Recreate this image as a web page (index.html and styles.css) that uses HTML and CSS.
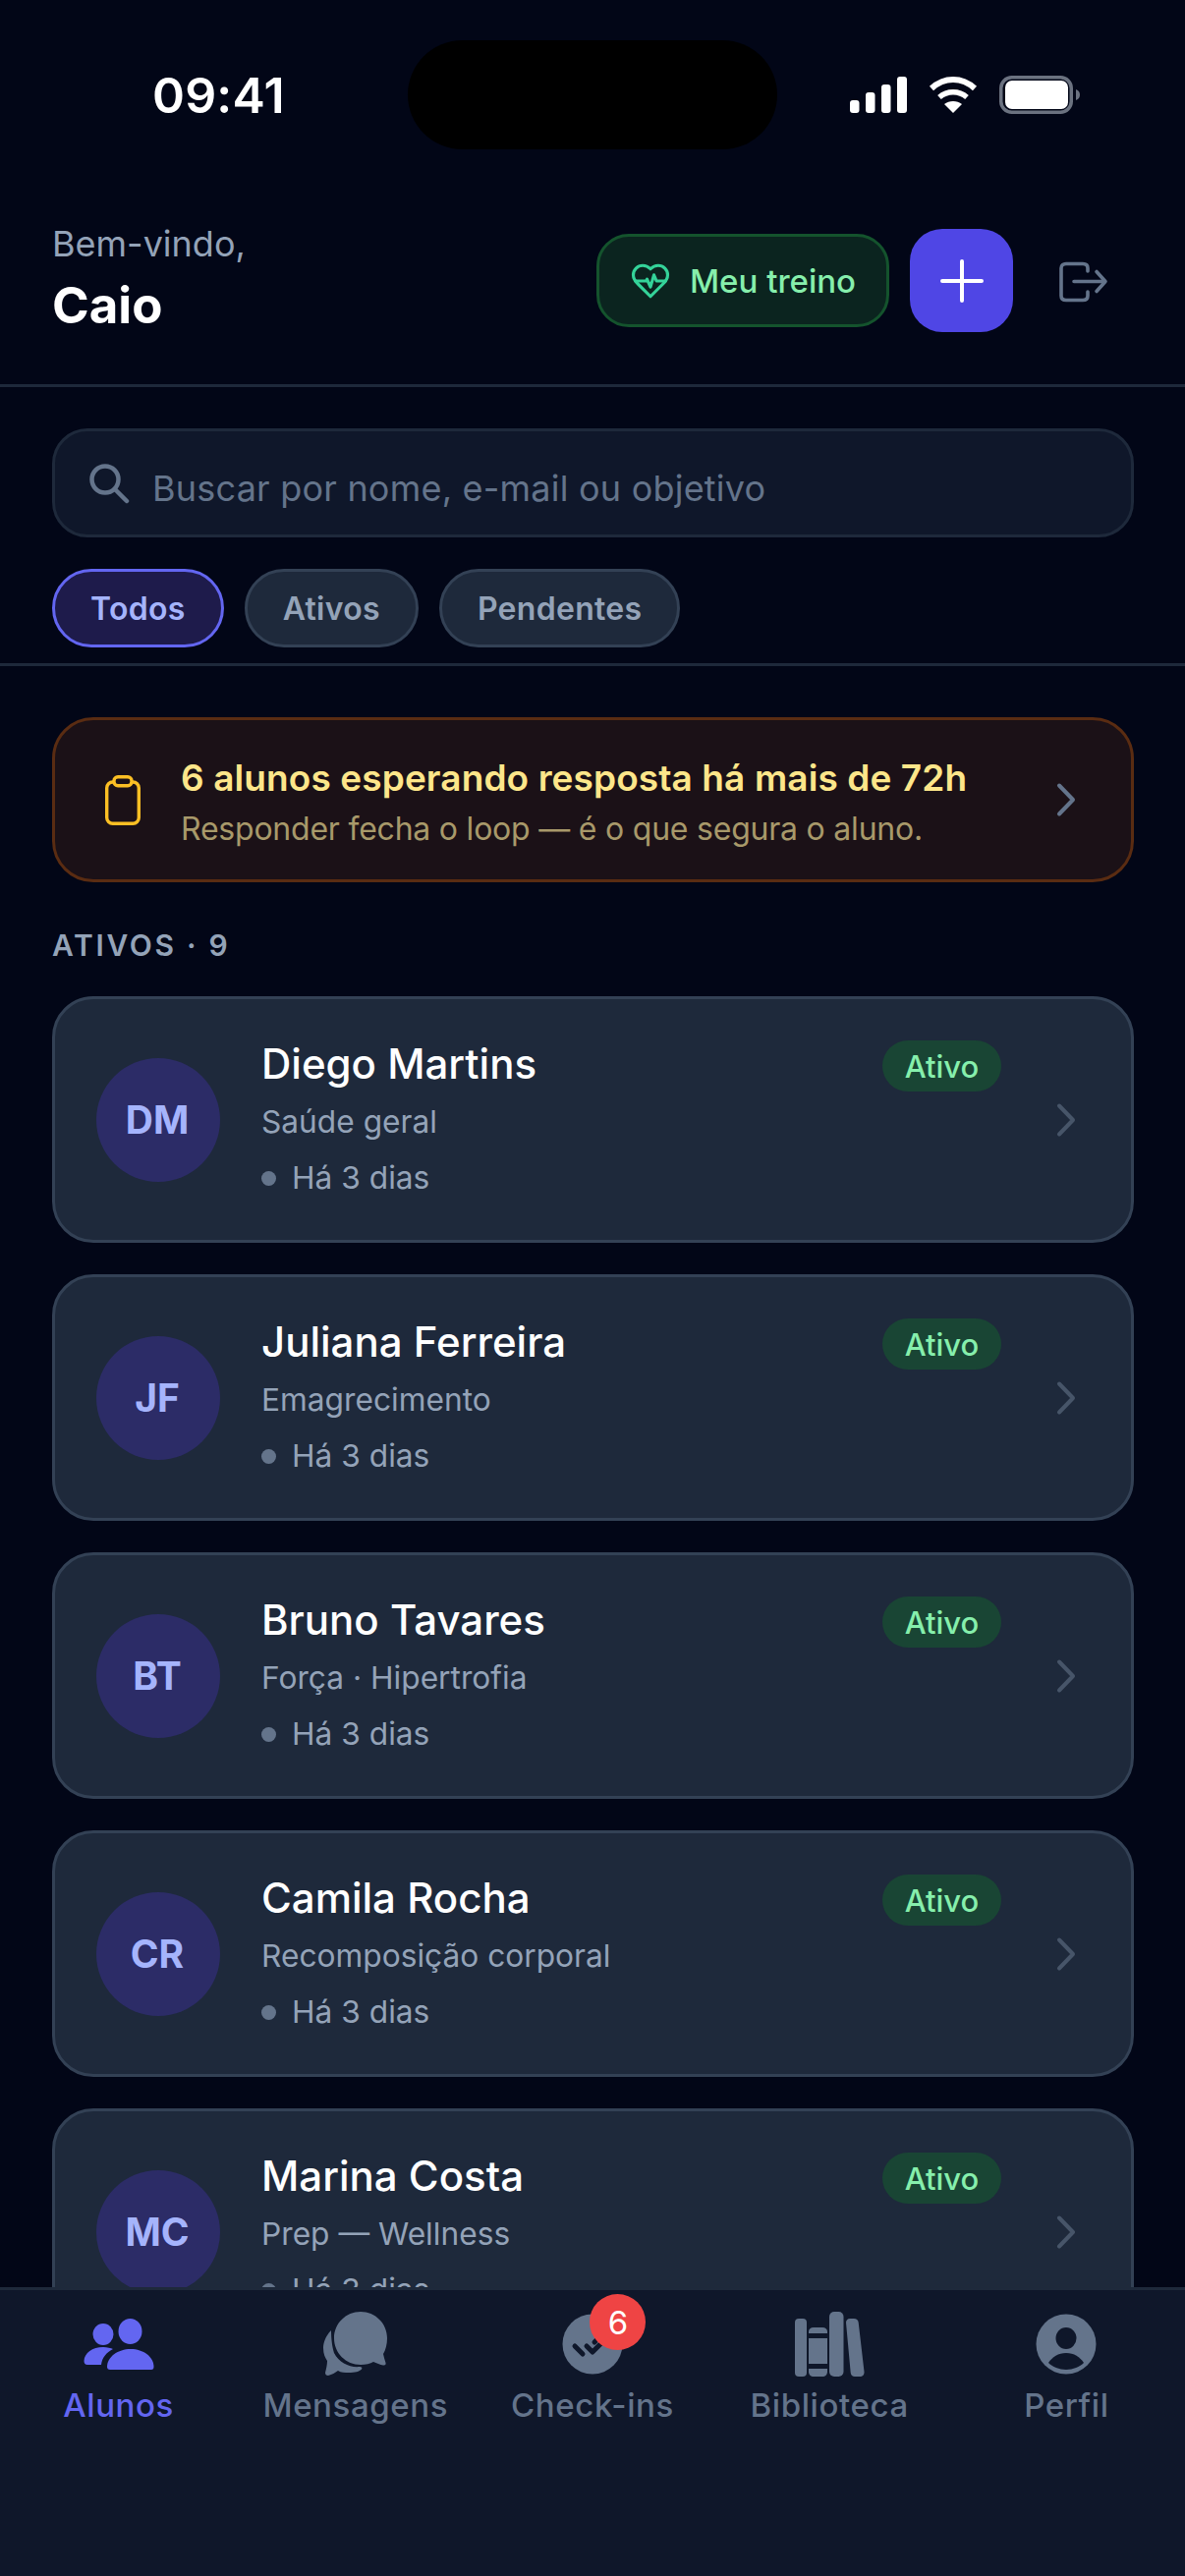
FILE: index.html
```html
<!DOCTYPE html>
<html lang="pt-BR">
<head>
	<meta charset="UTF-8">
	<title>Alunos</title>
	<link rel="stylesheet" href="styles.css">
</head>
<body>
	<div class="app">
		<div class="status-bar">
			<span class="status-time">09:41</span>
			<div class="island"></div>
			<div class="status-icons">
				<svg width="58" height="37" viewBox="0 0 58 37" fill="#fff">
					<rect x="0" y="24" width="9.5" height="13" rx="3"/>
					<rect x="16" y="16" width="9.5" height="21" rx="3"/>
					<rect x="32" y="8" width="9.5" height="29" rx="3"/>
					<rect x="48" y="0" width="10" height="37" rx="3"/>
				</svg>
				<svg width="50" height="37" viewBox="0 0 50 37" fill="none" stroke="#fff">
					<path d="M3 12C16 0 34 0 47 12" stroke-width="6"/>
					<path d="M11 21C19 14 31 14 39 21" stroke-width="5.5"/>
					<path d="M25 37L16 28C21 24 29 24 34 28Z" fill="#fff" stroke="none"/>
				</svg>
				<svg width="82" height="39" viewBox="0 0 82 39">
					<rect x="1.75" y="1.75" width="71.5" height="35.5" rx="11" fill="none" stroke="#6b7280" stroke-width="3.5"/>
					<rect x="6" y="5" width="64" height="29" rx="7" fill="#fff"/>
					<path d="M78 14C81 15 82 17 82 19.5C82 22 81 24 78 25Z" fill="#6b7280"/>
				</svg>
			</div>
		</div>

		<header class="header">
			<div class="greeting">
				<span class="greeting-hello">Bem-vindo,</span>
				<span class="greeting-name">Caio</span>
			</div>
			<div class="header-actions">
				<div class="btn-workout">
					<svg width="42" height="42" viewBox="0 0 24 24" fill="none" stroke="#34d399" stroke-width="1.8" stroke-linecap="round" stroke-linejoin="round">
						<path d="M19 14c1.49-1.46 3-3.21 3-5.5A5.5 5.5 0 0 0 16.5 3c-1.76 0-3 .5-4.5 2-1.5-1.5-2.74-2-4.5-2A5.5 5.5 0 0 0 2 8.5c0 2.3 1.5 4.05 3 5.5l7 7Z"/>
						<path d="M3.22 12H9.5l.5-1 2 4.5 2-7 1.5 3.5h5.27"/>
					</svg>
					<span>Meu treino</span>
				</div>
				<div class="btn-add">
					<svg width="48" height="48" viewBox="0 0 48 48" stroke="#fff" stroke-width="4" stroke-linecap="round">
						<path d="M24 4V44M4 24H44"/>
					</svg>
				</div>
				<div class="btn-logout">
					<svg width="54" height="48" viewBox="0 0 54 48" fill="none" stroke="#64748b" stroke-width="3.6" stroke-linecap="round" stroke-linejoin="round">
						<path d="M32 14V11C32 8 30 6.5 27 6.5H10C7 6.5 5 8 5 11V39C5 42 7 43.5 10 43.5H27C30 43.5 32 42 32 39V35"/>
						<path d="M18 24.5H50M41 14.5L50 24.5L41 34.5"/>
					</svg>
				</div>
			</div>
		</header>

		<section class="filters">
			<div class="search">
				<svg width="42" height="42" viewBox="0 0 42 42" fill="none" stroke="#64748b" stroke-width="4.5" stroke-linecap="round">
					<circle cx="17" cy="17" r="13.5"/>
					<path d="M27 27L39 39"/>
				</svg>
				<span class="search-text">Buscar por nome, e-mail ou objetivo</span>
			</div>
			<div class="chips">
				<span class="chip chip-active">Todos</span>
				<span class="chip">Ativos</span>
				<span class="chip">Pendentes</span>
			</div>
		</section>

		<main class="list">
			<div class="alert">
				<svg class="alert-icon" width="36" height="51" viewBox="0 0 36 51" fill="none" stroke="#fbbf24" stroke-width="3.4" stroke-linejoin="round">
					<rect x="1.7" y="7" width="32.6" height="42.3" rx="6"/>
					<rect x="9" y="1.7" width="18" height="9" rx="4" fill="#1b1117"/>
				</svg>
				<div class="alert-text">
					<span class="alert-title">6 alunos esperando resposta há mais de 72h</span>
					<span class="alert-sub">Responder fecha o loop — é o que segura o aluno.</span>
				</div>
				<svg class="chevron" width="36" height="36" viewBox="0 0 36 36" fill="none" stroke="#64748b" stroke-width="4" stroke-linecap="round" stroke-linejoin="round">
					<path d="M11 3.5L25 18L11 32.5"/>
				</svg>
			</div>

			<div class="section-label">ATIVOS · 9</div>

			<div class="cards">
				<div class="card">
					<div class="avatar">DM</div>
					<div class="card-body">
						<div class="card-top">
							<span class="card-name">Diego Martins</span>
							<span class="badge">Ativo</span>
						</div>
						<div class="card-goal">Saúde geral</div>
						<div class="card-meta"><i class="dot"></i>Há 3 dias</div>
					</div>
					<svg class="chevron" width="36" height="36" viewBox="0 0 36 36" fill="none" stroke="#475569" stroke-width="4" stroke-linecap="round" stroke-linejoin="round"><path d="M11 3.5L25 18L11 32.5"/></svg>
				</div>
				<div class="card">
					<div class="avatar">JF</div>
					<div class="card-body">
						<div class="card-top">
							<span class="card-name">Juliana Ferreira</span>
							<span class="badge">Ativo</span>
						</div>
						<div class="card-goal">Emagrecimento</div>
						<div class="card-meta"><i class="dot"></i>Há 3 dias</div>
					</div>
					<svg class="chevron" width="36" height="36" viewBox="0 0 36 36" fill="none" stroke="#475569" stroke-width="4" stroke-linecap="round" stroke-linejoin="round"><path d="M11 3.5L25 18L11 32.5"/></svg>
				</div>
				<div class="card">
					<div class="avatar">BT</div>
					<div class="card-body">
						<div class="card-top">
							<span class="card-name">Bruno Tavares</span>
							<span class="badge">Ativo</span>
						</div>
						<div class="card-goal">Força · Hipertrofia</div>
						<div class="card-meta"><i class="dot"></i>Há 3 dias</div>
					</div>
					<svg class="chevron" width="36" height="36" viewBox="0 0 36 36" fill="none" stroke="#475569" stroke-width="4" stroke-linecap="round" stroke-linejoin="round"><path d="M11 3.5L25 18L11 32.5"/></svg>
				</div>
				<div class="card">
					<div class="avatar">CR</div>
					<div class="card-body">
						<div class="card-top">
							<span class="card-name">Camila Rocha</span>
							<span class="badge">Ativo</span>
						</div>
						<div class="card-goal">Recomposição corporal</div>
						<div class="card-meta"><i class="dot"></i>Há 3 dias</div>
					</div>
					<svg class="chevron" width="36" height="36" viewBox="0 0 36 36" fill="none" stroke="#475569" stroke-width="4" stroke-linecap="round" stroke-linejoin="round"><path d="M11 3.5L25 18L11 32.5"/></svg>
				</div>
				<div class="card">
					<div class="avatar">MC</div>
					<div class="card-body">
						<div class="card-top">
							<span class="card-name">Marina Costa</span>
							<span class="badge">Ativo</span>
						</div>
						<div class="card-goal">Prep — Wellness</div>
						<div class="card-meta"><i class="dot"></i>Há 3 dias</div>
					</div>
					<svg class="chevron" width="36" height="36" viewBox="0 0 36 36" fill="none" stroke="#475569" stroke-width="4" stroke-linecap="round" stroke-linejoin="round"><path d="M11 3.5L25 18L11 32.5"/></svg>
				</div>
			</div>
		</main>

		<nav class="tabbar">
			<div class="tab tab-active">
				<svg width="78" height="78" viewBox="0 0 78 78" fill="#6366f1">
					<ellipse cx="50.5" cy="26" rx="12" ry="13"/>
					<ellipse cx="23" cy="29" rx="10.5" ry="11"/>
					<path d="M27 62C27 52 38 44 51 44C64 44 74.5 52 74.5 62Q74.5 65 72 65L30 65Q27 65 27 62Z"/>
					<path d="M3.5 56C4 48 12 42 23 42C27 42 31 43 33 44C27 47 22 52 21 60L7 60Q3.5 60 3.5 56Z"/>
				</svg>
				<span>Alunos</span>
			</div>
			<div class="tab">
				<svg width="78" height="78" viewBox="0 0 78 78" fill="#64748b">
					<path d="M44 6C29 6 17 18 17 33C17 48 29 60 44 60C49 60 54 59 57 57C60 58 64 60 67 60.5C69 61 70 59.5 69.5 58C68.5 55 67.5 51 67 49C69.5 45 71 39 71 33C71 18 59 6 44 6Z"/>
					<path d="M14 25C8 31 6 38 6 43C6 49 8 53 10 56C10 60 9 64 8 68C8 70 9 71 11 71C15 70 18 68 21 66C24 68 28 68 32 68C38 68 43 67 45 64.5C46 63 45 62 43 62C33 63 22 58 17 48C15 42 14 33 14 25Z"/>
				</svg>
				<span>Mensagens</span>
			</div>
			<div class="tab">
				<svg width="78" height="78" viewBox="0 0 78 78">
					<circle cx="39" cy="39" r="30.5" fill="#64748b"/>
					<path d="M21 41L29 49M33 41L39 47L56 30M41 37L48 30" fill="none" stroke="#0f172a" stroke-width="5" stroke-linecap="round" stroke-linejoin="round"/>
				</svg>
				<span class="tab-count">6</span>
				<span>Check-ins</span>
			</div>
			<div class="tab">
				<svg width="78" height="78" viewBox="0 0 78 78" fill="#64748b">
					<rect x="4" y="13" width="12" height="59" rx="4"/>
					<path d="M18 28V26C18 24 20 22 23 22H32C35 22 37 24 37 26V28Z"/>
					<rect x="18" y="33" width="19" height="26"/>
					<path d="M18 64H37V67C37 70 35 72 32 72H23C20 72 18 70 18 67Z"/>
					<rect x="39" y="6" width="14.5" height="66" rx="5"/>
					<path d="M56 17C56 15 57.5 13 60 13H64C66.5 13 68.5 14.5 68.7 17L74.5 67C74.8 70 73 72 70 72H65C62.5 72 61 70.5 60.7 68Z"/>
				</svg>
				<span>Biblioteca</span>
			</div>
			<div class="tab">
				<svg width="78" height="78" viewBox="0 0 78 78">
					<circle cx="39" cy="39" r="30.5" fill="#64748b"/>
					<ellipse cx="39" cy="33" rx="10.5" ry="11" fill="#0f172a"/>
					<path d="M21 58C25 52 31 48 39 48C47 48 53 52 57 58C53 62 46 65 39 65C32 65 25 62 21 58Z" fill="#0f172a"/>
				</svg>
				<span>Perfil</span>
			</div>
		</nav>
	</div>
</body>
</html>
```

FILE: styles.css
```css
* {
	margin: 0;
	padding: 0;
	box-sizing: border-box;
}

body {
	background-color: #020617;
	font-family: "Inter", "Liberation Sans", sans-serif;
}

.app {
	width: 1206px;
	height: 2622px;
	display: flex;
	flex-direction: column;
	overflow: hidden;
}

/* status bar */
.status-bar {
	height: 180px;
	padding-top: 41px;
	padding-bottom: 28px;
	display: grid;
	grid-template-columns: 415px 376px 1fr;
	align-items: center;
}

.status-time {
	padding-left: 155px;
	color: #fff;
	font-size: 50px;
	font-weight: 600;
	letter-spacing: 0.2px;
}

.island {
	height: 111px;
	border-radius: 56px;
	background-color: #000;
}

.status-icons {
	padding-left: 74px;
	display: flex;
	align-items: center;
	gap: 22px;
}

/* header */
.header {
	display: flex;
	justify-content: space-between;
	align-items: center;
	padding: 53px 54px 53px 53px;
	border-bottom: 3px solid #1e293b;
}

.greeting {
	display: flex;
	flex-direction: column;
	gap: 21px;
}

.greeting-hello {
	color: #94a3b8;
	font-size: 36px;
	line-height: 30px;
}

.greeting-name {
	color: #fff;
	font-size: 51px;
	font-weight: 700;
	line-height: 54px;
}

.header-actions {
	display: flex;
	align-items: center;
	gap: 21px;
}

.btn-workout {
	width: 298px;
	height: 95px;
	display: flex;
	align-items: center;
	justify-content: center;
	gap: 19px;
	border: 3px solid #14532d;
	border-radius: 33px;
	background-color: #0b241f;
	color: #86efac;
	font-size: 33px;
	font-weight: 500;
}

.btn-add {
	width: 105px;
	height: 105px;
	display: flex;
	align-items: center;
	justify-content: center;
	border-radius: 33px;
	background-color: #4f46e5;
}

.btn-logout {
	width: 100px;
	display: flex;
	justify-content: center;
}

/* search and chips */
.filters {
	padding: 42px 52px 16px 53px;
	border-bottom: 3px solid #1e293b;
}

.search {
	height: 111px;
	display: flex;
	align-items: center;
	gap: 23px;
	padding-left: 34px;
	border: 3px solid #1e293b;
	border-radius: 36px;
	background-color: #0f172a;
	color: #64748b;
	font-size: 36px;
	letter-spacing: 0.22px;
}

.search-text {
	padding-top: 10px;
}

.chips {
	display: flex;
	gap: 21px;
	margin-top: 32px;
}

.chip {
	height: 80px;
	display: flex;
	align-items: center;
	padding: 0 36px;
	border: 3px solid #334155;
	border-radius: 40px;
	background-color: #1e293b;
	color: #94a3b8;
	font-size: 32px;
	font-weight: 600;
	letter-spacing: 0.3px;
}

.chip-active {
	border-color: #6366f1;
	background-color: #1e1b4b;
	color: #a5b4fc;
}

/* list */
.list {
	flex: 1;
	overflow: hidden;
	padding: 52px 52px 0 53px;
}

.alert {
	height: 168px;
	display: flex;
	align-items: center;
	padding: 0 48px 0 51px;
	border: 3px solid #5a2c12;
	border-radius: 42px;
	background-color: #1b1117;
}

.alert-text {
	flex: 1;
	display: flex;
	flex-direction: column;
	gap: 10px;
	margin-left: 41px;
	padding-top: 6px;
}

.alert-title {
	color: #fde68a;
	font-size: 37px;
	font-weight: 600;
	line-height: 44px;
	letter-spacing: 0.1px;
}

.alert-sub {
	color: #a8996a;
	font-size: 32px;
	line-height: 40px;
	letter-spacing: -0.22px;
}

.section-label {
	margin: 46px 0 34px;
	color: #94a3b8;
	font-size: 30px;
	font-weight: 600;
	line-height: 36px;
	letter-spacing: 2.7px;
}

.cards {
	display: flex;
	flex-direction: column;
	gap: 32px;
}

.card {
	height: 251px;
	flex-shrink: 0;
	display: flex;
	align-items: center;
	gap: 42px;
	padding: 0 48px 0 42px;
	border: 3px solid #334155;
	border-radius: 42px;
	background-color: #1e293b;
}

.avatar {
	width: 126px;
	height: 126px;
	flex-shrink: 0;
	display: flex;
	align-items: center;
	justify-content: center;
	padding-right: 2px;
	border-radius: 50%;
	background-color: #2c2c67;
	color: #a5b4fc;
	font-size: 39px;
	font-weight: 700;
}

.card-body {
	flex: 1;
	margin-right: 6px;
}

.card-top {
	display: flex;
	justify-content: space-between;
	align-items: flex-start;
	height: 52px;
}

.card-name {
	color: #fff;
	font-size: 42px;
	font-weight: 500;
	line-height: 48px;
}

.badge {
	width: 121px;
	height: 52px;
	display: flex;
	align-items: center;
	justify-content: center;
	border-radius: 26px;
	background-color: #194534;
	color: #86efac;
	font-size: 31px;
	font-weight: 500;
}

.card-goal {
	margin-top: 10px;
	color: #94a3b8;
	font-size: 31.7px;
	line-height: 42px;
}

.card-meta {
	margin-top: 15px;
	display: flex;
	align-items: center;
	gap: 16px;
	color: #94a3b8;
	font-size: 31.7px;
	line-height: 42px;
}

.dot {
	width: 15px;
	height: 15px;
	border-radius: 50%;
	background-color: #64748b;
}

/* tab bar */
.tabbar {
	height: 294px;
	flex-shrink: 0;
	display: grid;
	grid-template-columns: repeat(5, 1fr);
	align-items: start;
	padding-top: 16px;
	border-top: 3px solid #1e293b;
	background-color: #0f172a;
}

.tab {
	position: relative;
	display: flex;
	flex-direction: column;
	align-items: center;
	gap: 3px;
	color: #64748b;
	font-size: 33px;
	font-weight: 500;
	line-height: 40px;
	letter-spacing: 0.6px;
}

.tab-active {
	color: #6366f1;
}

.tab-count {
	position: absolute;
	top: -12px;
	left: 118px;
	width: 57px;
	height: 57px;
	display: flex;
	align-items: center;
	justify-content: center;
	border-radius: 50%;
	background-color: #ef4444;
	color: #fff;
	font-size: 33px;
	font-weight: 400;
	letter-spacing: 0;
}
```
